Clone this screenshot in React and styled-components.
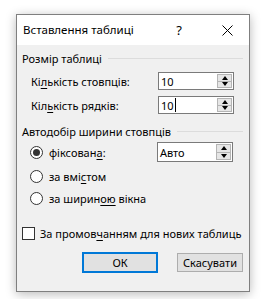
import React from "react";
import styled, { createGlobalStyle } from "styled-components";

const Global = createGlobalStyle`
  html, body { margin: 0; padding: 0; background: #ffffff; }
  body { font-family: "Noto Sans", "Segoe UI", sans-serif; font-size: 11px; color: #000; }
  * { box-sizing: border-box; }
`;

const Page = styled.div`
  padding: 14px 0 0 16px;
  width: 268px;
  height: 299px;
`;

const Dialog = styled.div`
  width: 234px;
  height: 278px;
  border: 1px solid #7f7f7f;
  background: #f0f0f0;
  box-shadow: 0 2px 10px rgba(0, 0, 0, 0.28);
  display: flex;
  flex-direction: column;
`;

const TitleBar = styled.div`
  height: 30px;
  background: #ffffff;
  display: flex;
  align-items: center;
  padding-left: 6px;
`;

const Title = styled.div`
  flex: 1;
  font-size: 11.5px;
  line-height: 16px;
`;

const HelpMark = styled.div`
  width: 12px;
  text-align: center;
  font-size: 13px;
  margin-right: 36px;
`;

const CloseBtn = styled.div`
  width: 12px;
  height: 12px;
  margin-right: 16px;
  display: flex;
  align-items: center;
  justify-content: center;
`;

const Body = styled.div`
  flex: 1;
  display: flex;
  flex-direction: column;
  padding: 5px 6px 0 5px;
`;

const GroupHeader = styled.div`
  display: flex;
  align-items: center;
  height: 16px;
  margin-top: ${(p) => p.$mt || 0}px;
  gap: 6px;
  &::after {
    content: "";
    flex: 1;
    height: 1px;
    background: #dcdcdc;
  }
`;

const FieldRow = styled.div`
  display: flex;
  align-items: center;
  height: ${(p) => p.$h || 18}px;
  margin-top: ${(p) => p.$mt || 0}px;
  padding-left: ${(p) => p.$pl ?? 9}px;
`;

const Label = styled.div`
  width: ${(p) => (p.$w ? `${p.$w}px` : "auto")};
  white-space: nowrap;
`;

const Spin = styled.div`
  width: 76px;
  height: ${(p) => p.$h || 18}px;
  border: 1px solid #7a7a7a;
  background: #fff;
  display: flex;
`;

const SpinText = styled.div`
  flex: 1;
  padding-left: 2px;
  display: flex;
  align-items: center;
`;

const Caret = styled.span`
  display: inline-block;
  width: 1px;
  height: 14px;
  background: #000;
  margin-left: 1px;
`;

const SpinButtons = styled.div`
  width: 16px;
  display: flex;
  flex-direction: column;
  padding: 1px 1px 1px 0;
`;

const SpinBtn = styled.div`
  flex: 1;
  background: #e6e6e6;
  border: 1px solid #b5b5b5;
  display: flex;
  align-items: center;
  justify-content: center;
  & + & { border-top: none; }
`;

const Arrow = styled.div`
  width: 0;
  height: 0;
  border-left: 3px solid transparent;
  border-right: 3px solid transparent;
  ${(p) =>
    p.$up
      ? "border-bottom: 4px solid #000;"
      : "border-top: 4px solid #000;"}
`;

const Radio = styled.div`
  width: 13px;
  height: 13px;
  border-radius: 50%;
  border: 1px solid #333;
  background: #fff;
  display: flex;
  align-items: center;
  justify-content: center;
  margin-right: 6px;
  flex-shrink: 0;
  &::after {
    content: "";
    width: 7px;
    height: 7px;
    border-radius: 50%;
    background: ${(p) => (p.$checked ? "#333" : "transparent")};
  }
`;

const Check = styled.div`
  width: 13px;
  height: 13px;
  border: 1px solid #333;
  background: #fff;
  margin-right: 5px;
  flex-shrink: 0;
`;

const ButtonRow = styled.div`
  display: flex;
  justify-content: flex-end;
  gap: 19px;
  margin-top: 11px;
`;

const Button = styled.div`
  width: ${(p) => p.$w}px;
  height: ${(p) => (p.$primary ? 21 : 19)}px;
  margin-top: ${(p) => (p.$primary ? 0 : 1)}px;
  border: ${(p) => (p.$primary ? "2px solid #0078d7" : "1px solid #adadad")};
  background: #e1e1e1;
  display: flex;
  align-items: center;
  justify-content: center;
`;

const U = styled.span`
  text-decoration: underline;
  text-underline-offset: 2px;
`;

function SpinBox({ value, caret, h }) {
  return (
    <Spin $h={h}>
      <SpinText>
        {value}
        {caret && <Caret />}
      </SpinText>
      <SpinButtons>
        <SpinBtn><Arrow $up /></SpinBtn>
        <SpinBtn><Arrow /></SpinBtn>
      </SpinButtons>
    </Spin>
  );
}

export default function App() {
  return (
    <>
      <Global />
      <Page>
        <Dialog>
          <TitleBar>
            <Title>Вставлення таблиці</Title>
            <HelpMark>?</HelpMark>
            <CloseBtn>
              <svg width="11" height="11" viewBox="0 0 11 11">
                <path d="M0.5 0.5 L10.5 10.5 M10.5 0.5 L0.5 10.5" stroke="#000" strokeWidth="1" fill="none" />
              </svg>
            </CloseBtn>
          </TitleBar>
          <Body>
            <GroupHeader>Розмір таблиці</GroupHeader>
            <FieldRow $mt={6}>
              <Label $w={127}>Кі<U>л</U>ькість стовпців:</Label>
              <SpinBox value="10" />
            </FieldRow>
            <FieldRow $mt={6}>
              <Label $w={127}>Кіл<U>ь</U>кість рядків:</Label>
              <SpinBox value="10" caret />
            </FieldRow>
            <GroupHeader $mt={9}>Автодобір ширини стовпців</GroupHeader>
            <FieldRow $mt={3} $h={20} $pl={8}>
              <Radio $checked />
              <Label $w={108}>фіксован<U>а</U>:</Label>
              <SpinBox value="Авто" h={20} />
            </FieldRow>
            <FieldRow $mt={6} $h={16} $pl={8}>
              <Radio />
              <Label>за вмі<U>с</U>том</Label>
            </FieldRow>
            <FieldRow $mt={6} $h={16} $pl={8}>
              <Radio />
              <Label>за ширин<U>ою</U> вікна</Label>
            </FieldRow>
            <FieldRow $mt={19} $h={16} $pl={0}>
              <Check />
              <Label>За промов<U>ч</U>анням для нових таблиць</Label>
            </FieldRow>
            <ButtonRow>
              <Button $primary $w={76}>ОК</Button>
              <Button $w={66}>Скасувати</Button>
            </ButtonRow>
          </Body>
        </Dialog>
      </Page>
    </>
  );
}
